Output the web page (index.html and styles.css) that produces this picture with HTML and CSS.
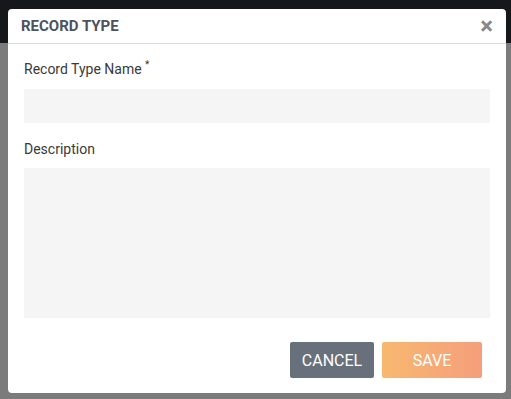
FILE: index.html
```html
<!DOCTYPE html>
<html lang="en">
<head>
    <meta charset="UTF-8">
    <title>Record Type</title>
    <link rel="stylesheet" href="styles.css">
</head>
<body>
    <div class="backdrop">
        <div class="modal">
            <div class="modal-header">
                <h3>RECORD TYPE</h3>
                <span class="close">&times;</span>
            </div>
            <div class="modal-body">
                <label class="field-label">Record Type Name <sup>*</sup></label>
                <div class="input"></div>
                <label class="field-label">Description</label>
                <div class="input textarea"></div>
                <div class="modal-footer">
                    <button class="btn btn-cancel">CANCEL</button>
                    <button class="btn btn-save">SAVE</button>
                </div>
            </div>
        </div>
    </div>
</body>
</html>
```

FILE: styles.css
```css
body {
    margin: 0;
    font-family: Roboto, 'Liberation Sans', sans-serif;
    color: #333;
}
.backdrop {
    height: 399px;
    box-sizing: border-box;
    padding: 9px 5px 0 8px;
    background: linear-gradient(to bottom, #16171b 0, #16171b 43px, #7b7b7b 43px, #7b7b7b 100%);
}
.modal {
    background: #fff;
    border-radius: 4px;
    height: 384px;
    box-sizing: border-box;
}
.modal-header {
    height: 34px;
    display: flex;
    align-items: center;
    justify-content: space-between;
    padding: 0 13px;
    border-bottom: 1px solid #dcdcdc;
}
.modal-header h3 {
    margin: 0;
    font-size: 15px;
    font-weight: bold;
    color: #4f525c;
}
.close {
    font-size: 24px;
    font-weight: bold;
    color: #888;
    line-height: 1;
    margin-top: -1px;
}
.modal-body {
    padding: 15px 16px 15px 16px;
}
.field-label {
    display: block;
    font-size: 14px;
    line-height: 20px;
    color: #3a3a3a;
    margin-bottom: 10px;
}
.field-label sup {
    font-size: 10px;
    vertical-align: top;
    line-height: 12px;
}
.input {
    height: 34px;
    background: #f5f5f5;
    margin-bottom: 16px;
}
.textarea {
    height: 150px;
    margin-top: -1px;
    margin-bottom: 24px;
}
.modal-footer {
    display: flex;
    justify-content: flex-end;
    gap: 8px;
    padding-right: 8px;
}
.btn {
    height: 36px;
    border: none;
    border-radius: 2px;
    color: #fff;
    font-family: Roboto, 'Liberation Sans', sans-serif;
    font-size: 16px;
    padding: 0;
}
.btn-cancel {
    width: 84px;
    background: #68717b;
}
.btn-save {
    width: 100px;
    background: linear-gradient(to right, #f8b870, #f59e7c);
}
```
